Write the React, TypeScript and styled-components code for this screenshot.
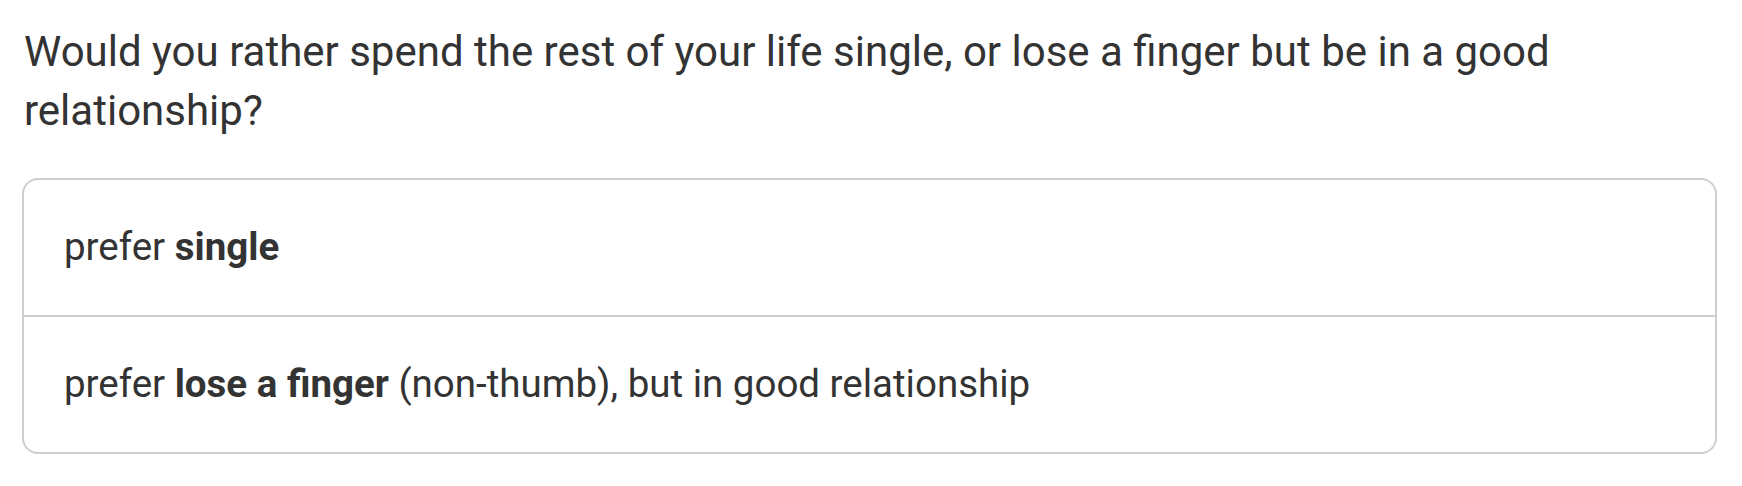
import React from "react";
import styled, { createGlobalStyle } from "styled-components";

const GlobalStyle = createGlobalStyle`
  html, body {
    margin: 0;
    padding: 0;
    background: #ffffff;
  }
  body {
    font-family: Roboto, "Liberation Sans", Arial, sans-serif;
    color: #333333;
  }
`;

const Page = styled.div`
  padding: 22px 25px 24px 22px;
  display: flex;
  flex-direction: column;
  gap: 38px;
`;

const Question = styled.h1`
  margin: 0;
  padding-left: 2px;
  font-size: 42px;
  font-weight: 400;
  line-height: 59px;
  color: #333333;
`;

const OptionList = styled.div`
  display: flex;
  flex-direction: column;
  border: 2px solid #cfcfcf;
  border-radius: 16px;
  overflow: hidden;
`;

const OptionRow = styled.div<{ $last?: boolean }>`
  display: flex;
  align-items: center;
  height: 135px;
  padding: 0 40px;
  font-size: 38.5px;
  line-height: 1.2;
  color: #333333;
  border-bottom: ${(p) => (p.$last ? "none" : "2px solid #cfcfcf")};
`;

const Strong = styled.b`
  font-weight: 700;
`;

export default function App() {
  return (
    <>
      <GlobalStyle />
      <Page>
        <Question>
          Would you rather spend the rest of your life single, or lose a finger but be in a good
          relationship?
        </Question>
        <OptionList>
          <OptionRow>
            <span>
              prefer <Strong>single</Strong>
            </span>
          </OptionRow>
          <OptionRow $last>
            <span>
              prefer <Strong>lose a finger</Strong> (non-thumb), but in good relationship
            </span>
          </OptionRow>
        </OptionList>
      </Page>
    </>
  );
}
